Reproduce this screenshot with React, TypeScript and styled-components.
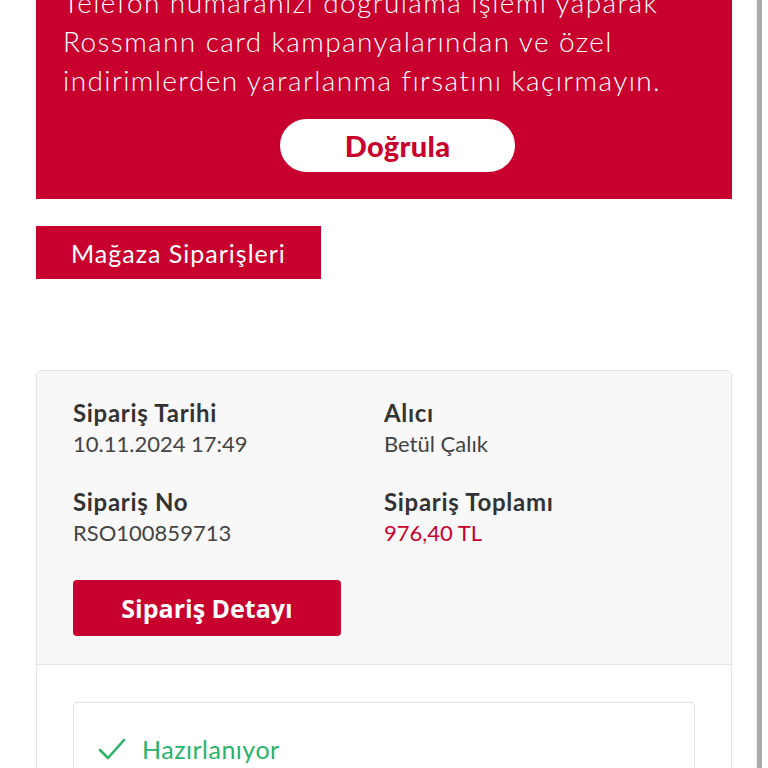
import React from "react";
import styled, { createGlobalStyle } from "styled-components";

const Global = createGlobalStyle`
  html, body { margin: 0; padding: 0; background: #fff; }
  body { font-family: Lato, "Open Sans", sans-serif; color: #333; overflow: hidden; }
`;

const RED = "#c8002e";

const Page = styled.div`
  display: flex;
  align-items: flex-start;
  width: 768px;
  height: 768px;
  overflow: hidden;
`;

const Content = styled.main`
  width: 696px;
  margin-left: 36px;
  display: flex;
  flex-direction: column;
  align-items: flex-start;
  flex-shrink: 0;
  & > * { flex-shrink: 0; }
`;

const Rail = styled.div`
  margin-left: auto;
  margin-right: 6px;
  width: 5px;
  height: 768px;
  background: #a9a9a9;
  border-left: 1px solid #f0f0f0;
`;

const Banner = styled.section`
  align-self: stretch;
  background: ${RED};
  margin-top: -17px;
  padding: 0 0 27px 27px;
  display: flex;
  flex-direction: column;
`;

const BannerText = styled.p`
  margin: 0;
  color: #fff;
  font-family: Lato, sans-serif;
  font-weight: 300;
  font-size: 28px;
  line-height: 39px;
  letter-spacing: 1.4px;
  white-space: nowrap;
`;

const PillButton = styled.button`
  align-self: center;
  margin-top: 19px;
  width: 235px;
  height: 53px;
  border: none;
  border-radius: 27px;
  background: #fff;
  color: ${RED};
  font-family: Lato, sans-serif;
  font-weight: 900;
  font-size: 29px;
  letter-spacing: 0.3px;
`;

const TabButton = styled.button`
  margin-top: 27px;
  width: 285px;
  height: 53px;
  border: none;
  background: ${RED};
  color: #fff;
  font-family: Lato, sans-serif;
  font-weight: 400;
  font-size: 25px;
  letter-spacing: 1px;
  text-align: left;
  padding: 0 0 0 35px;
`;

const Card = styled.section`
  align-self: stretch;
  margin-top: 91px;
  border: 1px solid #e3e3e3;
  border-radius: 5px;
  overflow: hidden;
`;

const Summary = styled.div`
  background: #f8f8f8;
  padding: 27px 36px 28px 36px;
  border-bottom: 1px solid #e3e3e3;
`;

const Grid = styled.div`
  display: grid;
  grid-template-columns: 311px 1fr;
  row-gap: 27px;
`;

const Field = styled.div`
  display: flex;
  flex-direction: column;
`;

const Label = styled.span`
  font-weight: 700;
  font-size: 24px;
  line-height: 30px;
  letter-spacing: 0.7px;
  color: #333;
`;

const Value = styled.span<{ $accent?: boolean }>`
  font-weight: 400;
  font-size: 22px;
  line-height: 32px;
  color: ${(p) => (p.$accent ? RED : "#444")};
`;

const DetailButton = styled.button`
  margin-top: 31px;
  width: 268px;
  height: 56px;
  border: none;
  border-radius: 4px;
  background: ${RED};
  color: #fff;
  font-family: "Open Sans", sans-serif;
  font-weight: 700;
  font-size: 25px;
`;

const Shipment = styled.div`
  background: #fff;
  padding: 37px 36px 30px 36px;
`;

const ShipmentBox = styled.div`
  border: 1px solid #e3e3e3;
  border-radius: 4px;
  padding: 30px 24px;
`;

const Status = styled.div`
  display: flex;
  align-items: center;
  gap: 16px;
  color: #2bb36a;
  font-size: 25px;
  letter-spacing: 0.5px;
  line-height: 32px;
`;

export default function App() {
  return (
    <>
      <Global />
      <Page>
        <Content>
          <Banner>
            <BannerText>
              Telefon numaranızı doğrulama işlemi yaparak
              <br />
              Rossmann card kampanyalarından ve özel
              <br />
              indirimlerden yararlanma fırsatını kaçırmayın.
            </BannerText>
            <PillButton>Doğrula</PillButton>
          </Banner>
          <TabButton>Mağaza Siparişleri</TabButton>
          <Card>
            <Summary>
              <Grid>
                <Field>
                  <Label>Sipariş Tarihi</Label>
                  <Value>10.11.2024 17:49</Value>
                </Field>
                <Field>
                  <Label>Alıcı</Label>
                  <Value>Betül Çalık</Value>
                </Field>
                <Field>
                  <Label>Sipariş No</Label>
                  <Value>RSO100859713</Value>
                </Field>
                <Field>
                  <Label>Sipariş Toplamı</Label>
                  <Value $accent>976,40 TL</Value>
                </Field>
              </Grid>
              <DetailButton>Sipariş Detayı</DetailButton>
            </Summary>
            <Shipment>
              <ShipmentBox>
                <Status>
                  <svg width="28" height="24" viewBox="0 0 28 24" fill="none">
                    <path d="M2 13 L10 21 L26 3" stroke="#2bb36a" strokeWidth="2.6" strokeLinecap="round" strokeLinejoin="round" />
                  </svg>
                  Hazırlanıyor
                </Status>
              </ShipmentBox>
            </Shipment>
          </Card>
        </Content>
        <Rail />
      </Page>
    </>
  );
}
